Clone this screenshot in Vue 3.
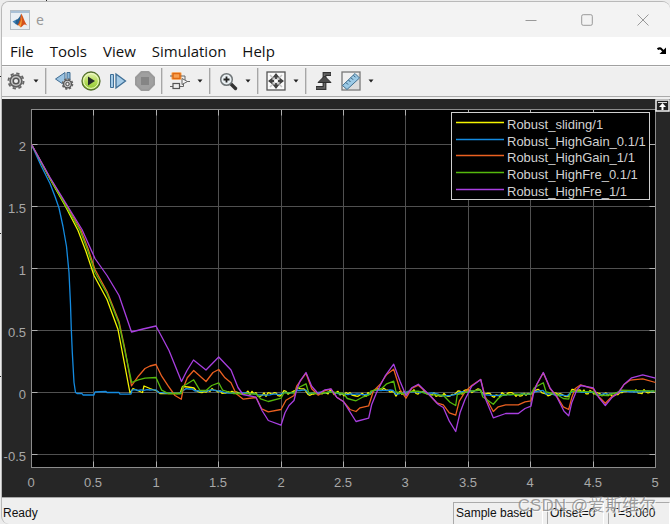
<script setup>
const menus = ['File', 'Tools', 'View', 'Simulation', 'Help']
const xTicks = [0, 0.5, 1, 1.5, 2, 2.5, 3, 3.5, 4, 4.5, 5]
const yTicks = [2, 1.5, 1, 0.5, 0, -0.5]
const plot = { left: 29.5, right: 653.5, top: 10.5, bottom: 368.5 }
const px = (t) => Math.floor(plot.left + t * 124.8)
const py = (v) => Math.round(293.6 - v * 123.8)

/* Traces are kept in window pixels; the plot group is shifted to match. */
const purple = '31.5,145 50,178 66,204 82,230 95,259 107,276 119,296 131.5,332.5 143,329.5 156,326.5 169,351 181.5,382 187,371 193.5,360.5 206,370.5 218.7,357.5 231,370.5 238,388 243,395 256,397.7 262,411 268.3,421 281,425.7 285,413.3 289,406 294,401 296.7,390 300,381.7 306,373 311.7,386.7 318.3,394.3 325,390.3 331,389.3 336.7,397.7 343.7,402.3 356,422 368.7,418.7 371.7,405 376.7,392.7 385,376.7 393.7,364.7 400,381.7 406,396 411.7,388.3 418.3,384.7 430,396 438.3,405 443.3,408 449.3,421.7 455.7,432 460,413.3 465,400 471.7,386.7 480.7,380 485,398.3 493.3,418.3 505.7,414 518.3,414 525,409 531,406.7 533.3,395 536.7,385 543.3,373 550,388.3 556.7,397.3 564,411.7 568.7,416.3 571.7,403.3 576.7,390.7 580.7,386 593.3,388.3 598.3,397.3 605.3,406 611.7,398.3 618.3,393.3 624,385 631.7,378.3 642.7,375.3 655.5,378.7'
const orange = '31.5,145 50,178.5 66,205 81,231 88,249 95,270 107,292 119,322 125,350 131.5,386.3 138.3,376.7 145,369 150,366.5 156,365 161.7,376.7 168.3,386.7 175,396 181.3,399.7 183.3,388.3 187.3,378.3 193.7,371 206,382 213,373 218.7,370 225,378.3 231,383.3 236,394 243.3,399.7 256,398 261.7,409.3 268.3,412.3 281,410 286,400.7 294,396 296.7,386.7 306,373.7 311.7,389.3 318.3,395.7 325,391 331,389.7 336.7,397.7 343.7,402.3 350,410 356,412 360,408.3 368.7,406.3 373.3,391.7 380,385 386.7,375 393.7,369.7 400,390 406,398.7 411.7,389 418.3,385.7 430,396 436.7,403.3 443.3,405.3 449.3,413.3 455.7,415.7 459.3,401.7 465,392.3 471.7,386 480.7,380 485,396.7 493.3,412 498.3,407.3 505.7,405.3 518.3,405.3 525,402.3 531,401.3 534,390 543.3,373.3 550,389 556.7,396.7 563.3,407.3 568.7,410 571.7,398.3 575,389.3 580.7,385.3 593.3,389.3 598.3,396.7 605.3,403.7 611.7,397.3 618.3,393.3 624,385 630,380.7 642.7,379.3 655.5,383'
const green = '31.5,145 50,179 65,205 80,231 87,249 95,273 107,294 119,324 131.7,383 138.3,380.3 145,378.7 156,378 161.7,390.7 168.3,394 181.3,394 183.3,386.7 193.7,380.3 200,391 206,391 211.7,386 218.7,383.3 222.7,390.7 233.3,394 256,394.3 260.7,399.3 268.3,402 281,398.7 284,393.3 294,393.3 296.7,389 306,384.3 308.7,393.3 318.3,394 331,392.3 343.7,394 347.3,399 356,401.3 363.3,397.3 368.7,395.7 370.7,391.7 381.7,389 386.7,384.3 393.7,381.7 396,392.3 406,395 408.3,392 418.3,391.7 430,395.3 443.3,395.7 450,402.7 455.7,406 457.3,395 470,391.7 480.7,390.7 482.7,397.3 493.3,404.7 498.3,399 503.3,395.3 531,394.3 534.3,388.3 543.3,383.3 546,392.3 556.7,395 563.3,399 568.7,399.7 570.7,391.7 593.3,392.3 596.7,395.7 606.7,396 618.3,392.7 620,390.7 655.5,391.7'

const base = [[132, 390.5], [157, 390.5], [158, 393.5], [182, 394], [184, 389.5], [193, 389.5], [195, 392], [218, 390.5], [223, 393], [256, 394], [258, 395.5], [281, 395], [284, 393], [294, 393], [296, 390.5], [306, 390.5], [308, 394], [330, 392.5], [344, 394.5], [369, 395], [371, 391.5], [394, 390.5], [396, 394.5], [408, 392], [431, 393.5], [442, 396], [455, 396], [457, 393], [480, 391], [483, 396], [530, 394.5], [535, 391.5], [544, 391.5], [546, 394], [568, 397], [571, 392], [594, 392.5], [597, 395], [616, 394.5], [619, 392], [655, 392]]

function baseAt(x) {
  let i = 1
  while (i < base.length - 1 && base[i][0] < x) i++
  const [x0, y0] = base[i - 1]
  const [x1, y1] = base[i]
  return y0 + ((y1 - y0) * (x - x0)) / (x1 - x0)
}
function ripple(start, step, size, seed) {
  let s = seed
  const out = []
  for (let x = start; x <= 655; x += step) {
    s = (s * 1103515245 + 12345) % 2147483648
    out.push(`${x},${(baseAt(x) + (s / 2147483648 - 0.5) * size).toFixed(1)}`)
  }
  return out.join(' ')
}
const yellow = '31.5,145 50,179.5 65,206 78,231 86,252 94,276 107,300 118,330 130,393.5 133,389 141,392.5 142.5,393 144,386.5 150,389 158,392 160,394 180,394 182.5,387 188,387.5 194,388.5 196,391 ' + ripple(198, 2, 4.6, 77)
const blue = '31.5,145 41,166 50,184 55,197 59,208.5 63,227 66.5,247 69,273 70.5,305 71.3,330 72.3,353 74,383 75.5,393 77,394 82,394 83,395.5 94,395.5 95,392.5 106,392 107,393 119,393 120,394.7 131,394.7 ' + ripple(132, 3, 1.2, 5)

const series = [
  { name: 'Robust_sliding/1', color: '#f4f400', points: yellow, y: 24 },
  { name: 'Robust_HighGain_0.1/1', color: '#148be0', points: blue, y: 41 },
  { name: 'Robust_HighGain_1/1', color: '#ea6020', points: orange, y: 57 },
  { name: 'Robust_HighFre_0.1/1', color: '#55b80c', points: green, y: 74 },
  { name: 'Robust_HighFre_1/1', color: '#a83fe0', points: purple, y: 91 },
]
</script>

<template>
  <div class="desktop">
    <main class="window">
      <header class="titlebar">
        <svg class="logo" viewBox="0 0 20 20" aria-hidden="true">
          <rect x="0.5" y="0.5" width="19" height="19" fill="#e9eef3" stroke="#b4bcc4" />
          <path d="M1 2h18" stroke="#a9c0d6" stroke-width="2" />
          <path d="M2.500 11.500l4-2 2.500 2.500-3 2.500z" fill="#3f7fb5" />
          <path d="M6 10q3-1 5-6l-.5 8-3 3.500-2-2z" fill="#25608f" />
          <path d="M11.300 3.500c1.500 2 3 8 6 12-2-1.500-3.500-1.500-4.500.3l-2 1.700c-1-1.500-2-2.500-3.500-2.500 2-2 3-6 4-11.500z" fill="#d5511c" />
          <path d="M11.300 4c.6 4-.3 8-2.500 11.300l1.600 1.700c1.500-3 2-8 .9-13z" fill="#f5a136" />
        </svg>
        <h1>e</h1>
        <button class="win" aria-label="Minimize"><svg viewBox="0 0 12 12"><path d="M0.500 6.500h11" /></svg></button>
        <button class="win" aria-label="Maximize"><svg viewBox="0 0 12 12"><rect x="0.700" y="0.700" width="10.600" height="10.600" rx="1.500" /></svg></button>
        <button class="win" aria-label="Close"><svg viewBox="0 0 12 12"><path d="M0.500 0.500l11 11M11.500 0.500l-11 11" /></svg></button>
      </header>

      <nav class="menubar">
        <button v-for="m in menus" :key="m">{{ m }}</button>
        <button class="dock" aria-label="Dock window">
          <svg viewBox="0 0 10 8"><path d="M0.500 2.200Q3 .5 4.500 2.200L7 4.800" fill="none" stroke="#000" stroke-width="2" /><path d="M9 0.500v6.500H2.500z" fill="#000" /></svg>
        </button>
      </nav>

      <div class="toolbar" role="toolbar">
        <button aria-label="Configuration">
          <svg viewBox="0 0 20 20">
            <circle cx="10" cy="10" r="7.600" fill="none" stroke="#666" stroke-width="1.800" stroke-dasharray="3.400 2.570" />
            <circle cx="10" cy="10" r="5.900" fill="#c4c4c4" stroke="#606060" stroke-width="1.600" />
            <circle cx="10" cy="10" r="2.800" fill="#efefef" stroke="#555" stroke-width="1.500" />
          </svg>
        </button>
        <button class="caret" aria-label="Configuration options"><svg viewBox="0 0 6 4"><path d="M0.500 0.500h5L3 3.500z" /></svg></button>
        <span class="sep"></span>
        <button aria-label="Step back options">
          <svg viewBox="0 0 20 20">
            <path d="M11 1.500v13L1.500 8z" fill="#9cc4e2" stroke="#3f6c92" />
            <path d="M13 1.500h3v9h-3z" fill="#8eb9da" stroke="#3f6c92" />
            <circle cx="13.500" cy="13" r="5" fill="#ddd" stroke="#666" stroke-width="1.600" stroke-dasharray="2.200 1.730" />
            <circle cx="13.500" cy="13" r="3.900" fill="#c8c8c8" stroke="#555" stroke-width="1.300" />
            <circle cx="13.500" cy="13" r="1.700" fill="#eee" stroke="#444" />
          </svg>
        </button>
        <button aria-label="Run">
          <svg viewBox="0 0 20 20">
            <defs><linearGradient id="run" x2="0" y2="1"><stop offset="0" stop-color="#e8f6b8" /><stop offset="0.500" stop-color="#b6dd5b" /><stop offset="1" stop-color="#8cc52f" /></linearGradient></defs>
            <circle cx="10" cy="10" r="9" fill="url(#run)" stroke="#55702f" stroke-width="1.300" />
            <circle cx="10" cy="10" r="7.400" fill="none" stroke="#eef8c8" stroke-width="1" />
            <path d="M7 5.500v9l7-4.500z" fill="#252b2b" />
          </svg>
        </button>
        <button aria-label="Step forward">
          <svg viewBox="0 0 20 20">
            <path d="M2.500 3.500h3v13h-3z" fill="#a5cbe7" stroke="#3f6f96" />
            <path d="M8 3v14l9.500-7z" fill="#a5cbe7" stroke="#3f6f96" stroke-width="1.300" />
          </svg>
        </button>
        <button aria-label="Stop" disabled>
          <svg viewBox="0 0 20 20">
            <path d="M6.500 1h7L19 6.500v7L13.500 19h-7L1 13.500v-7z" fill="#a0a0a0" stroke="#9a9a9a" stroke-width="2" stroke-linejoin="round" />
            <rect x="6" y="6" width="8" height="8" fill="#858585" />
          </svg>
        </button>
        <span class="sep"></span>
        <button aria-label="Highlight block">
          <svg viewBox="0 0 20 20">
            <rect x="1" y="1" width="11" height="8" rx="2" fill="#fbc48c" />
            <path d="M0 5h3M10 5h5v4M0 15.500h3M9 15.500h4.500V12M17 10.500h3" fill="none" stroke="#666" />
            <rect x="3" y="2.500" width="7" height="5" fill="#f7a052" stroke="#df6a12" stroke-width="1.500" />
            <rect x="3" y="12.500" width="6.500" height="5" fill="#eee" stroke="#555" stroke-width="1.200" />
            <path d="M12 7.500v6l5.500-3z" fill="#f5f5f5" stroke="#666" />
          </svg>
        </button>
        <button class="caret" aria-label="Highlight options"><svg viewBox="0 0 6 4"><path d="M0.500 0.500h5L3 3.500z" /></svg></button>
        <span class="sep"></span>
        <button aria-label="Zoom">
          <svg viewBox="0 0 20 20">
            <path d="M12.500 12.500l5 5" stroke="#333" stroke-width="3.400" stroke-linecap="round" />
            <circle cx="8.500" cy="8.500" r="5.800" fill="#eaf0f3" stroke="#707678" stroke-width="1.500" />
            <path d="M5.500 8.500h6M8.500 5.500v6" stroke="#222" stroke-width="1.800" />
          </svg>
        </button>
        <button class="caret" aria-label="Zoom options"><svg viewBox="0 0 6 4"><path d="M0.500 0.500h5L3 3.500z" /></svg></button>
        <span class="sep"></span>
        <button aria-label="Fit to view">
          <svg viewBox="0 0 20 20">
            <rect x="1" y="1" width="18" height="18" fill="#fafafa" stroke="#555" stroke-width="1.300" />
            <path d="M10 3l7 7-7 7-7-7z" fill="#d8d8d8" />
            <path d="M4 4l12 12M16 4L4 16" stroke="#c4c4c4" stroke-width="1.500" />
            <path d="M10 2l3.500 4.500h-7zM10 18l3.500-4.500h-7zM2 10l4.500-3.500v7zM18 10l-4.500-3.500v7z" fill="#424242" />
            <path d="M10 5v3M10 12v3M5 10h3M12 10h3" stroke="#424242" stroke-width="1.800" />
            <rect x="8.500" y="8.500" width="3" height="3" fill="#fff" />
          </svg>
        </button>
        <button class="caret" aria-label="Fit options"><svg viewBox="0 0 6 4"><path d="M0.500 0.500h5L3 3.500z" /></svg></button>
        <span class="sep"></span>
        <button aria-label="Triggers">
          <svg viewBox="0 0 20 20">
            <path d="M2 17h8.500V3H17" fill="none" stroke="#333" stroke-width="3.800" />
            <path d="M2.500 17h8V3h6" fill="none" stroke="#6a6a6a" stroke-width="1.600" />
            <path d="M10.500 5l6.500 6.500H4z" fill="#4d4d4d" stroke="#2d2d2d" />
          </svg>
        </button>
        <button aria-label="Cursor measurements">
          <svg viewBox="0 0 20 20">
            <rect x="1" y="1" width="18" height="18" fill="#f0f0f0" stroke="#777" stroke-width="1.300" />
            <path d="M2 18h16V2z" fill="#dcdcdc" />
            <path d="M1.500 14.500L14 2.500l4.500 4.500L6 18.500z" fill="#9ccae6" stroke="#416f8f" />
            <path d="M5 11.500l2 2M7.500 9l2 2M10 6.700l2 2M12.500 4.300l2 2" stroke="#2f5876" />
          </svg>
        </button>
        <button class="caret" aria-label="Measurement options"><svg viewBox="0 0 6 4"><path d="M0.500 0.500h5L3 3.500z" /></svg></button>
      </div>

      <svg class="scope" viewBox="0 0 668 398" role="img" aria-label="Scope plot">
        <rect width="668" height="398" fill="#262626" />
        <rect :x="plot.left" :y="plot.top" :width="plot.right - plot.left" :height="plot.bottom - plot.top" fill="#000" />
        <g stroke="#505050" shape-rendering="crispEdges">
          <line v-for="t in xTicks.slice(1, -1)" :key="t" :x1="px(t) + 0.5" :x2="px(t) + 0.5" :y1="plot.top" :y2="plot.bottom" />
          <line v-for="v in yTicks" :key="v" :x1="plot.left" :x2="plot.right" :y1="py(v) - 0.5" :y2="py(v) - 0.5" />
        </g>
        <g stroke="#b0b0b0">
          <g v-for="t in xTicks.slice(1, -1)" :key="t">
            <line :x1="px(t) + 0.5" :x2="px(t) + 0.5" :y1="plot.bottom - 6" :y2="plot.bottom" />
            <line :x1="px(t) + 0.5" :x2="px(t) + 0.5" :y1="plot.top" :y2="plot.top + 6" />
          </g>
          <g v-for="v in yTicks" :key="v">
            <line :x1="plot.left" :x2="plot.left + 6" :y1="py(v) - 0.5" :y2="py(v) - 0.5" />
            <line :x1="plot.right - 6" :x2="plot.right" :y1="py(v) - 0.5" :y2="py(v) - 0.5" />
          </g>
        </g>
        <rect :x="plot.left" :y="plot.top" :width="plot.right - plot.left" :height="plot.bottom - plot.top" fill="none" stroke="#8c8c8c" />
        <g transform="translate(-2 -99.500)" fill="none" stroke-width="1.300" stroke-linejoin="round">
          <polyline v-for="s in series" :key="s.name" :points="s.points" :stroke="s.color" />
        </g>
        <g class="axis">
          <text v-for="t in xTicks" :key="t" :x="px(t)" y="388" text-anchor="middle">{{ t }}</text>
          <text v-for="v in yTicks" :key="v" x="24" :y="py(v) + 6" text-anchor="end">{{ v }}</text>
        </g>
        <rect x="449.500" y="13.500" width="198" height="87" fill="#000" stroke="#d0d0d0" />
        <g class="legend">
          <template v-for="s in series" :key="s.name">
            <line x1="454" x2="502" :y1="s.y - 0.500" :y2="s.y - 0.500" :stroke="s.color" stroke-width="1.300" />
            <text x="505" :y="s.y + 6">{{ s.name }}</text>
          </template>
        </g>
        <g>
          <rect x="654" y="1" width="13" height="11" fill="#222" stroke="#f2f2f2" stroke-width="1.500" />
          <path d="M656 3.500h9" stroke="#ddd" />
          <path d="M660.500 4l3.500 4h-7z" fill="#fff" />
          <path d="M660.500 7v4" stroke="#fff" stroke-width="2" />
        </g>
      </svg>

      <footer class="status">
        <span class="ready">Ready</span>
        <span class="cell sample">Sample based</span>
        <span class="cell offset">Offset=0</span>
        <span class="cell time">T=5.000</span>
        <span class="mark">CSDN @爱斯维尔</span>
      </footer>
    </main>
  </div>
</template>

<style>
body {
  margin: 0;
}
</style>

<style scoped>
.desktop {
  box-sizing: border-box;
  min-height: 100vh;
  padding: 1px 0 0 1px;
  display: flex;
  background:
    linear-gradient(#222, #222) 46px 0 / 1px 1px no-repeat,
    linear-gradient(#222, #222) 0 76px / 2px 1px no-repeat,
    linear-gradient(#222, #222) 0 233px / 2px 1px no-repeat,
    linear-gradient(#222, #222) 0 376px / 2px 1px no-repeat,
    #ececec;
}
.window {
  flex: 1;
  min-width: 0;
  display: flex;
  flex-direction: column;
  border: solid #b9b9b9;
  border-width: 1px 0 0 1px;
  border-radius: 8px 8px 0 8px;
  overflow: hidden;
  background: #efefef;
  font-family: "Noto Sans", "Open Sans", sans-serif;
}
button {
  padding: 0;
  border: 0;
  background: none;
  font: inherit;
  color: inherit;
}
svg {
  display: block;
}
.titlebar {
  height: 35px;
  display: flex;
  align-items: center;
  padding-left: 8px;
  background: #f3f3f3;
}
.logo {
  width: 20px;
  height: 20px;
}
h1 {
  flex: 1;
  margin: 0 0 0 6px;
  font-size: 14px;
  font-weight: 400;
  color: #999;
}
.win {
  width: 56px;
  height: 35px;
  display: grid;
  place-items: center;
}
.win:last-child {
  margin-right: -1px;
}
.win svg {
  width: 12px;
  height: 12px;
  fill: none;
  stroke: #999;
}
.menubar {
  height: 28px;
  display: flex;
  align-items: center;
  gap: 16px;
  padding: 0 3px 0 8px;
  background: #fff;
  border-bottom: 1px solid #a0a0a0;
  font-family: "Open Sans", "Noto Sans", sans-serif;
  font-size: 15px;
  color: #111;
}
.dock {
  margin-left: auto;
}
.dock svg {
  width: 10px;
  height: 8px;
}
.toolbar {
  height: 30px;
  display: flex;
  align-items: center;
  background: #efefef;
  border-bottom: 1px solid #aaa;
  box-shadow: inset 0 1px #f8f8f8;
}
.toolbar button {
  width: 27px;
  height: 26px;
  display: grid;
  place-items: center;
}
.toolbar button svg {
  width: 20px;
  height: 20px;
}
.toolbar .caret {
  width: 13px;
}
.toolbar .caret svg {
  width: 6px;
  height: 4px;
  fill: #222;
}
.sep {
  width: 1px;
  height: 26px;
  margin: 0 3px;
  background: #a6a6a6;
  border-right: 1px solid #d4d4d4;
}
.scope {
  width: 100%;
  height: auto;
  margin-top: 2px;
  font-family: "Liberation Sans", Arial, sans-serif;
  font-size: 13px;
}
.axis {
  fill: #a8a8a8;
}
.legend {
  fill: #d2d2d2;
}
.status {
  position: relative;
  flex: 1;
  min-height: 25px;
  display: flex;
  align-items: stretch;
  gap: 4px;
  border-top: 1px solid #a8a8a8;
  font-family: "Liberation Sans", Arial, sans-serif;
  font-size: 12px;
  line-height: 20px;
  color: #111;
}
.ready {
  flex: 1;
  padding: 5px 0 0 1px;
}
.cell {
  box-sizing: border-box;
  margin-top: 4px;
  padding-left: 2px;
  border: 1px solid #fff;
  border-top-color: #aaa;
  border-left-color: #aaa;
  border-bottom: 0;
}
.sample {
  width: 90px;
}
.offset {
  width: 57px;
}
.time {
  width: 62px;
}
.mark {
  position: absolute;
  right: 14px;
  top: -4px;
  font-family: "Liberation Sans", "Noto Sans CJK SC", sans-serif;
  font-size: 17px;
  line-height: 24px;
  color: rgba(120, 120, 120, 0.7);
  text-shadow: 1px 1px rgba(255, 255, 255, 0.7);
}
</style>
